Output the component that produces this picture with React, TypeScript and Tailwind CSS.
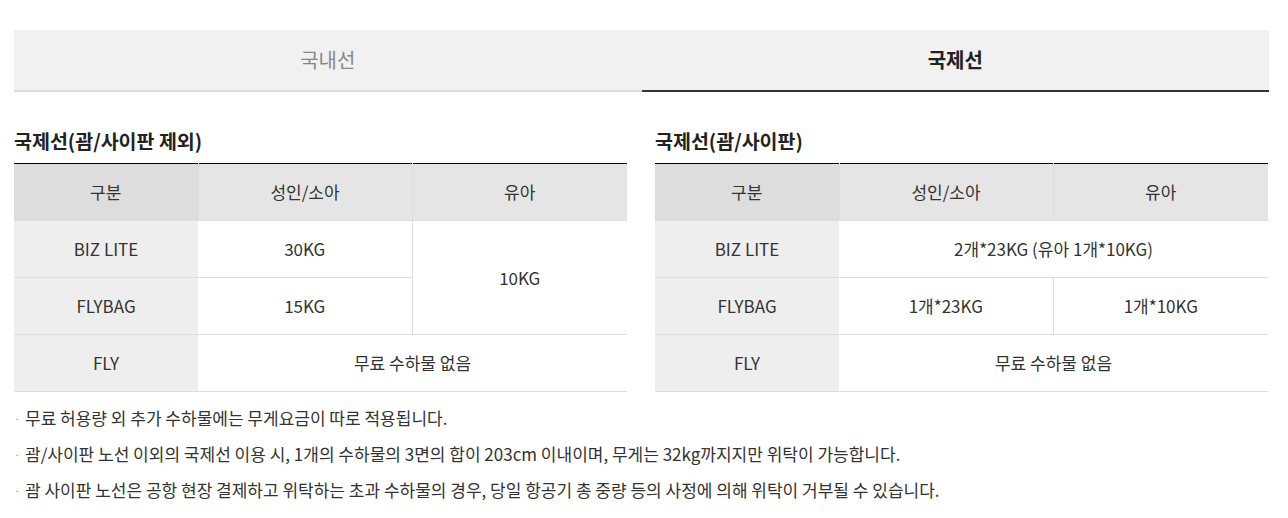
const font = { fontFamily: '"Noto Sans CJK KR", "Noto Sans", sans-serif' };

const th = "h-[57px] border-b border-[#dddddd] text-center font-normal text-[17px] text-[#333]";
const td = "h-[57px] border-b border-[#dddddd] text-center text-[17px] text-[#333]";

function Tabs() {
  return (
    <div className="flex w-[1255px] bg-[#f1f1f1] h-[62px]">
      <div className="flex-1 flex items-center justify-center border-b-2 border-[#dcdcdc] text-[20px] text-[#888]">
        국내선
      </div>
      <div className="flex-1 flex items-center justify-center border-b-2 border-[#333] text-[20px] font-bold text-[#222]">
        국제선
      </div>
    </div>
  );
}

const ExcludeTable = () => (
  <div className="w-[613px]">
    <h4 className="text-[19.5px] font-bold text-[#222] leading-none mb-[13px] h-[19px]">국제선(괌/사이판 제외)</h4>
    <table className="w-full border-collapse border-t border-black table-fixed">
      <colgroup>
        <col className="w-[184px]" />
        <col className="w-[214px]" />
        <col />
      </colgroup>
      <thead>
        <tr>
          <th className={`${th} bg-[#dddddd]`}>구분</th>
          <th className={`${th} bg-[#e5e5e5] border-l`}>성인/소아</th>
          <th className={`${th} bg-[#e5e5e5] border-l`}>유아</th>
        </tr>
      </thead>
      <tbody>
        <tr>
          <td className={`${td} bg-[#eeeeee]`}>BIZ LITE</td>
          <td className={td}>30KG</td>
          <td className={`${td} border-l`} rowSpan={2}>10KG</td>
        </tr>
        <tr>
          <td className={`${td} bg-[#eeeeee]`}>FLYBAG</td>
          <td className={td}>15KG</td>
        </tr>
        <tr>
          <td className={`${td} bg-[#eeeeee]`}>FLY</td>
          <td className={td} colSpan={2}>무료 수하물 없음</td>
        </tr>
      </tbody>
    </table>
  </div>
);

const GuamTable = () => (
  <div className="w-[613px]">
    <h4 className="text-[19.5px] font-bold text-[#222] leading-none mb-[13px] h-[19px]">국제선(괌/사이판)</h4>
    <table className="w-full border-collapse border-t border-black table-fixed">
      <colgroup>
        <col className="w-[184px]" />
        <col className="w-[214px]" />
        <col />
      </colgroup>
      <thead>
        <tr>
          <th className={`${th} bg-[#dddddd]`}>구분</th>
          <th className={`${th} bg-[#e5e5e5] border-l`}>성인/소아</th>
          <th className={`${th} bg-[#e5e5e5] border-l`}>유아</th>
        </tr>
      </thead>
      <tbody>
        <tr>
          <td className={`${td} bg-[#eeeeee]`}>BIZ LITE</td>
          <td className={td} colSpan={2}>2개*23KG (유아 1개*10KG)</td>
        </tr>
        <tr>
          <td className={`${td} bg-[#eeeeee]`}>FLYBAG</td>
          <td className={td}>1개*23KG</td>
          <td className={`${td} border-l`}>1개*10KG</td>
        </tr>
        <tr>
          <td className={`${td} bg-[#eeeeee]`}>FLY</td>
          <td className={td} colSpan={2}>무료 수하물 없음</td>
        </tr>
      </tbody>
    </table>
  </div>
);

const notes = [
  "무료 허용량 외 추가 수하물에는 무게요금이 따로 적용됩니다.",
  "괌/사이판 노선 이외의 국제선 이용 시, 1개의 수하물의 3면의 합이 203cm 이내이며, 무게는 32kg까지지만 위탁이 가능합니다.",
  "괌 사이판 노선은 공항 현장 결제하고 위탁하는 초과 수하물의 경우, 당일 항공기 총 중량 등의 사정에 의해 위탁이 거부될 수 있습니다.",
];

export default function App() {
  return (
    <div className="bg-white w-[1288px] h-[518px] pt-[30px] pl-[14px]" style={font}>
      <Tabs />
      <div className="flex gap-[28px] mt-[39px]">
        <ExcludeTable />
        <GuamTable />
      </div>
      <ul className="mt-[14px] flex flex-col gap-[12px]">
        {notes.map((n) => (
          <li key={n} className="flex items-center text-[17px] text-[#333] leading-[24px]">
            <span className="w-[11px] text-[#999] text-[11px]">·</span>
            {n}
          </li>
        ))}
      </ul>
    </div>
  );
}
